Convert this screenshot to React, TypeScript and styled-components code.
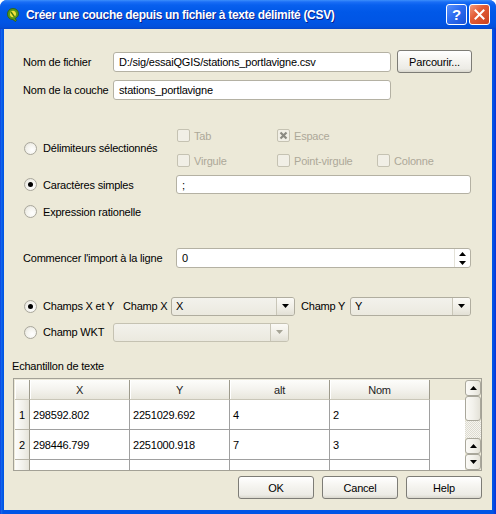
import React from "react";
import styled, { createGlobalStyle, css } from "styled-components";

const GlobalStyle = createGlobalStyle`
  html, body { margin: 0; padding: 0; width: 496px; height: 514px; overflow: hidden; background: #fff; }
  body { font-family: "Liberation Sans", Arial, sans-serif; font-size: 11px; letter-spacing: -0.2px; color: #000; }
  * { box-sizing: border-box; }
`;

const Window = styled.div`
  width: 496px;
  height: 514px;
  display: flex;
  flex-direction: column;
  background: linear-gradient(to right, #0831d9 0px, #166aee 1px, #0055e5 3px, #0055e5 calc(100% - 3px), #0831d9 100%);
  border-radius: 7px 7px 0 0;
  overflow: hidden;
`;

const TitleBar = styled.div`
  height: 29px;
  flex: none;
  display: flex;
  align-items: center;
  padding: 0 6px 0 6px;
  background: linear-gradient(to bottom, #3c8ffb 0px, #1a6ef6 2px, #0860ee 5px, #0058e8 12px, #0055e5 22px, #0250dc 27px, #0746c6 29px);
  color: #fff;
`;

const TitleText = styled.div`
  margin-left: 6px;
  font-family: "Liberation Sans", Arial, sans-serif;
  font-weight: bold;
  font-size: 12px;
  letter-spacing: -0.32px;
  text-shadow: 1px 1px 0 #0a1e8c;
  flex: 1;
  white-space: nowrap;
`;

const CaptionButton = styled.div<{ $kind: "help" | "close" }>`
  width: 21px;
  height: 21px;
  border: 1px solid #fff;
  border-radius: 3px;
  display: flex;
  align-items: center;
  justify-content: center;
  margin-left: 2px;
  color: #fff;
  font-weight: bold;
  font-size: 15px;
  ${(p) =>
    p.$kind === "help"
      ? css`background: linear-gradient(135deg, #5a92fc 0%, #2d6cf0 45%, #1a52d6 100%);`
      : css`background: linear-gradient(135deg, #f29b7e 0%, #e35c36 40%, #c9411f 100%);`}
`;

const Client = styled.div`
  flex: 1;
  margin: 0 4px 4px 4px;
  background: #ece9d8;
  display: flex;
  flex-direction: column;
`;

const Form = styled.div`
  padding: 21px 21px 0 19px;
  display: flex;
  flex-direction: column;
`;

const Row = styled.div<{ $top: number; $h: number }>`
  display: flex;
  align-items: center;
  margin-top: ${(p) => p.$top}px;
  height: ${(p) => p.$h}px;
`;

const Label = styled.div<{ $w?: number; $pl?: number }>`
  ${(p) => (p.$w ? `width: ${p.$w}px;` : "")}
  padding-left: ${(p) => p.$pl ?? 0}px;
  flex: none;
  white-space: nowrap;
`;

const LineEdit = styled.div<{ $w?: number; $h: number }>`
  ${(p) => (p.$w ? `width: ${p.$w}px; flex: none;` : "flex: 1;")}
  height: ${(p) => p.$h}px;
  background: #fff;
  border: 1px solid #b4b1a3;
  border-radius: 3px;
  padding: 0 5px;
  display: flex;
  align-items: center;
  white-space: nowrap;
  overflow: hidden;
`;

const PushButton = styled.div<{ $w: number; $h: number }>`
  width: ${(p) => p.$w}px;
  height: ${(p) => p.$h}px;
  flex: none;
  border: 1px solid #7d7c76;
  border-radius: 3px;
  background: linear-gradient(to bottom, #ffffff 0%, #f6f5f1 40%, #ecebe5 85%, #d9d7cd 100%);
  display: flex;
  align-items: center;
  justify-content: center;
`;

const RadioOption = styled.div<{ $w: number }>`
  width: ${(p) => p.$w}px;
  flex: none;
  display: flex;
  align-items: center;
  padding-left: 1px;
  white-space: nowrap;
`;

const RadioCircle = styled.span<{ $on?: boolean }>`
  width: 13px;
  height: 13px;
  border-radius: 50%;
  border: 1px solid #a9a79c;
  background: radial-gradient(circle at 65% 65%, #ffffff 0%, #f3f2ec 55%, #dcdad0 100%);
  margin-right: 6px;
  display: flex;
  align-items: center;
  justify-content: center;
  flex: none;
  &::after {
    content: "";
    width: 5px;
    height: 5px;
    border-radius: 50%;
    background: #000;
    display: ${(p) => (p.$on ? "block" : "none")};
  }
`;

const DelimBlock = styled.div`
  display: flex;
  align-items: center;
  margin-top: 29px;
  height: 38px;
`;

const CheckGrid = styled.div`
  display: grid;
  grid-template-columns: 100px 100px auto;
  grid-auto-rows: 13px;
  row-gap: 12px;
  padding-left: 1px;
`;

const CheckItem = styled.div`
  display: flex;
  align-items: center;
  color: #aca899;
  white-space: nowrap;
`;

const CheckBox = styled.span`
  width: 13px;
  height: 13px;
  border: 1px solid #c5c2b2;
  border-radius: 2px;
  background: #f1efe6;
  margin-right: 4px;
  display: flex;
  align-items: center;
  justify-content: center;
  flex: none;
`;

const SpinBox = styled.div`
  flex: 1;
  height: 20px;
  background: #fff;
  border: 1px solid #b4b1a3;
  border-radius: 3px;
  display: flex;
  align-items: center;
  padding-left: 5px;
`;

const SpinText = styled.div`
  flex: 1;
`;

const SpinArrows = styled.div`
  width: 16px;
  height: 18px;
  display: flex;
  flex-direction: column;
  border-left: 1px solid #e4e2d8;
`;

const SpinArrow = styled.div`
  flex: 1;
  display: flex;
  align-items: center;
  justify-content: center;
`;

const Combo = styled.div<{ $w?: number; $disabled?: boolean }>`
  ${(p) => (p.$w ? `width: ${p.$w}px; flex: none;` : "flex: 1;")}
  height: 19px;
  border: 1px solid ${(p) => (p.$disabled ? "#c5c2b2" : "#b0ad9f")};
  border-radius: 3px;
  background: linear-gradient(to bottom, #f3f2ec 0%, #ebe9df 100%);
  display: flex;
  align-items: stretch;
  color: ${(p) => (p.$disabled ? "#aca899" : "#000")};
`;

const ComboText = styled.div`
  flex: 1;
  padding-left: 4px;
  display: flex;
  align-items: center;
  border-right: 1px solid #c9c6b8;
`;

const ComboArrow = styled.div`
  width: 17px;
  display: flex;
  align-items: center;
  justify-content: center;
  background: linear-gradient(to bottom, #fbfaf6 0%, #efede5 60%, #e2e0d5 100%);
  border-radius: 0 2px 2px 0;
`;

const Sample = styled.div`
  padding: 0 10px 0 8px;
  margin-top: 17px;
  display: flex;
  flex-direction: column;
`;

const SampleTitle = styled.div`
  height: 14px;
  line-height: 14px;
`;

const Table = styled.div`
  margin-top: 5px;
  margin-left: 1px;
  height: 93px;
  border: 1px solid #a3a196;
  padding: 1px 0 0 1px;
  display: flex;
  background: #ece9d8;
`;

const TableViewport = styled.div`
  flex: 1;
  display: flex;
  flex-direction: column;
  overflow: hidden;
`;

const HeaderRow = styled.div`
  display: flex;
  height: 20px;
  flex: none;
`;

const BodyArea = styled.div`
  flex: 1;
  background: #fff;
  overflow: hidden;
`;

const BodyRow = styled.div`
  display: flex;
  height: 30px;
`;

const HeadCell = styled.div<{ $w: number }>`
  width: ${(p) => p.$w}px;
  flex: none;
  background: linear-gradient(to bottom, #fdfdfb 0%, #f4f3ee 50%, #e8e6dc 100%);
  border-right: 1px solid #9d9a8c;
  border-bottom: 1px solid #c9c6b8;
  box-shadow: inset 1px 0 0 #ffffff;
  display: flex;
  align-items: center;
  justify-content: center;
  color: #222;
`;

const RowHead = styled.div`
  width: 15px;
  flex: none;
  background: linear-gradient(to right, #fdfdfb 0%, #f1f0ea 60%, #e6e4da 100%);
  border-right: 1px solid #9d9a8c;
  border-bottom: 1px solid #b6b3a6;
  display: flex;
  align-items: center;
  justify-content: center;
`;

const Cell = styled.div`
  width: 100px;
  flex: none;
  border-right: 1px solid #a0a0a0;
  border-bottom: 1px solid #a0a0a0;
  padding-left: 3px;
  display: flex;
  align-items: center;
  background: #fff;
`;

const ScrollBar = styled.div`
  width: 16px;
  flex: none;
  display: flex;
  flex-direction: column;
`;

const ScrollBtn = styled.div<{ $h: number }>`
  height: ${(p) => p.$h}px;
  flex: none;
  border: 1px solid #a9a79b;
  border-radius: 3px;
  background: linear-gradient(to right, #fbfaf6 0%, #f2f1eb 50%, #e4e2d8 100%);
  display: flex;
  align-items: center;
  justify-content: center;
`;

const ScrollTrack = styled.div`
  flex: 1;
  background: repeating-conic-gradient(#f6f5f0 0 25%, #dddbd0 0 50%) 0 0 / 2px 2px;
`;

const ButtonRow = styled.div`
  display: flex;
  justify-content: flex-end;
  gap: 8px;
  margin-top: 5px;
  padding-right: 0;
`;

const Tri = ({ up, color = "#000" }: { up?: boolean; color?: string }) => (
  <svg width="7" height="4" viewBox="0 0 7 4">
    {up ? <polygon points="0,4 7,4 3.5,0" fill={color} /> : <polygon points="0,0 7,0 3.5,4" fill={color} />}
  </svg>
);

const QgisIcon = () => (
  <svg width="14" height="15" viewBox="0 0 14 15">
    <path d="M7 1.5 C3.5 1.5 1.5 4 1.5 7.2 C1.5 10.5 3.8 12.5 6.8 12.5 L9.5 14.5 L10.5 13.2 L9 11.6 C11.2 10.5 12.5 8.8 12.5 6.8 C12.5 3.8 10.3 1.5 7 1.5 Z" fill="#5a9a1a" stroke="#2c5a08" strokeWidth="0.8" />
    <path d="M7 3.8 C5 3.8 4 5.3 4 7.2 C4 9 5.2 10.2 7 10.2 C8.8 10.2 10 8.8 10 7 C10 5.2 8.9 3.8 7 3.8 Z" fill="#f3e23a" />
    <path d="M5 5 L8.5 9.8" stroke="#3f7a10" strokeWidth="1.4" />
  </svg>
);

const headers = ["X", "Y", "alt", "Nom"];
const rows = [
  ["1", "298592.802", "2251029.692", "4", "2"],
  ["2", "298446.799", "2251000.918", "7", "3"],
  ["", "", "", "", ""],
];

export default function App() {
  return (
    <>
      <GlobalStyle />
      <Window>
        <TitleBar>
          <QgisIcon />
          <TitleText>Créer une couche depuis un fichier à texte délimité (CSV)</TitleText>
          <CaptionButton $kind="help">?</CaptionButton>
          <CaptionButton $kind="close">
            <svg width="11" height="11" viewBox="0 0 11 11">
              <path d="M1.5 1.5 L9.5 9.5 M9.5 1.5 L1.5 9.5" stroke="#fff" strokeWidth="2" strokeLinecap="square" />
            </svg>
          </CaptionButton>
        </TitleBar>
        <Client>
          <Form>
            <Row $top={0} $h={23}>
              <Label $w={90}>Nom de fichier</Label>
              <LineEdit $w={278} $h={20}>D:/sig/essaiQGIS/stations_portlavigne.csv</LineEdit>
              <Label $w={6} />
              <PushButton $w={75} $h={23}>Parcourir...</PushButton>
            </Row>
            <Row $top={6} $h={21}>
              <Label $w={90}>Nom de la couche</Label>
              <LineEdit $w={278} $h={20}>stations_portlavigne</LineEdit>
            </Row>
            <DelimBlock>
              <RadioOption $w={153}>
                <RadioCircle />
                Délimiteurs sélectionnés
              </RadioOption>
              <CheckGrid>
                <CheckItem><CheckBox />Tab</CheckItem>
                <CheckItem>
                  <CheckBox>
                    <svg width="9" height="9" viewBox="0 0 9 9">
                      <path d="M1.5 1.5 L7.5 7.5 M7.5 1.5 L1.5 7.5" stroke="#8b8a82" strokeWidth="2.2" />
                    </svg>
                  </CheckBox>
                  Espace
                </CheckItem>
                <span />
                <CheckItem><CheckBox />Virgule</CheckItem>
                <CheckItem><CheckBox />Point-virgule</CheckItem>
                <CheckItem><CheckBox />Colonne</CheckItem>
              </CheckGrid>
            </DelimBlock>
            <Row $top={8} $h={19}>
              <RadioOption $w={153}>
                <RadioCircle $on />
                Caractères simples
              </RadioOption>
              <LineEdit $h={19}>;</LineEdit>
            </Row>
            <Row $top={8} $h={19}>
              <RadioOption $w={153}>
                <RadioCircle />
                Expression rationelle
              </RadioOption>
            </Row>
            <Row $top={27} $h={20}>
              <Label $w={153}>Commencer l'import à la ligne</Label>
              <SpinBox>
                <SpinText>0</SpinText>
                <SpinArrows>
                  <SpinArrow><Tri up /></SpinArrow>
                  <SpinArrow><Tri /></SpinArrow>
                </SpinArrows>
              </SpinBox>
            </Row>
            <Row $top={28} $h={20}>
              <RadioOption $w={100}>
                <RadioCircle $on />
                Champs X et Y
              </RadioOption>
              <Label $w={48}>Champ X</Label>
              <Combo $w={124}>
                <ComboText>X</ComboText>
                <ComboArrow><Tri /></ComboArrow>
              </Combo>
              <Label $w={55} $pl={6}>Champ Y</Label>
              <Combo>
                <ComboText>Y</ComboText>
                <ComboArrow><Tri /></ComboArrow>
              </Combo>
            </Row>
            <Row $top={6} $h={20}>
              <RadioOption $w={90}>
                <RadioCircle />
                Champ WKT
              </RadioOption>
              <Combo $w={176} $disabled>
                <ComboText />
                <ComboArrow><Tri color="#a6a496" /></ComboArrow>
              </Combo>
            </Row>
          </Form>
          <Sample>
            <SampleTitle>Echantillon de texte</SampleTitle>
            <Table>
              <TableViewport>
                <HeaderRow>
                  <HeadCell $w={15} />
                  {headers.map((h) => (
                    <HeadCell key={h} $w={100}>{h}</HeadCell>
                  ))}
                </HeaderRow>
                <BodyArea>
                  {rows.map((r, i) => (
                    <BodyRow key={i}>
                      <RowHead>{r[0]}</RowHead>
                      {r.slice(1).map((c, j) => (
                        <Cell key={j}>{c}</Cell>
                      ))}
                    </BodyRow>
                  ))}
                </BodyArea>
              </TableViewport>
              <ScrollBar>
                <ScrollBtn $h={16}><Tri up /></ScrollBtn>
                <ScrollBtn $h={25} />
                <ScrollTrack />
                <ScrollBtn $h={16}><Tri up /></ScrollBtn>
                <ScrollBtn $h={16}><Tri /></ScrollBtn>
              </ScrollBar>
            </Table>
            <ButtonRow>
              <PushButton $w={76} $h={23}>OK</PushButton>
              <PushButton $w={76} $h={23}>Cancel</PushButton>
              <PushButton $w={76} $h={23}>Help</PushButton>
            </ButtonRow>
          </Sample>
        </Client>
      </Window>
    </>
  );
}
